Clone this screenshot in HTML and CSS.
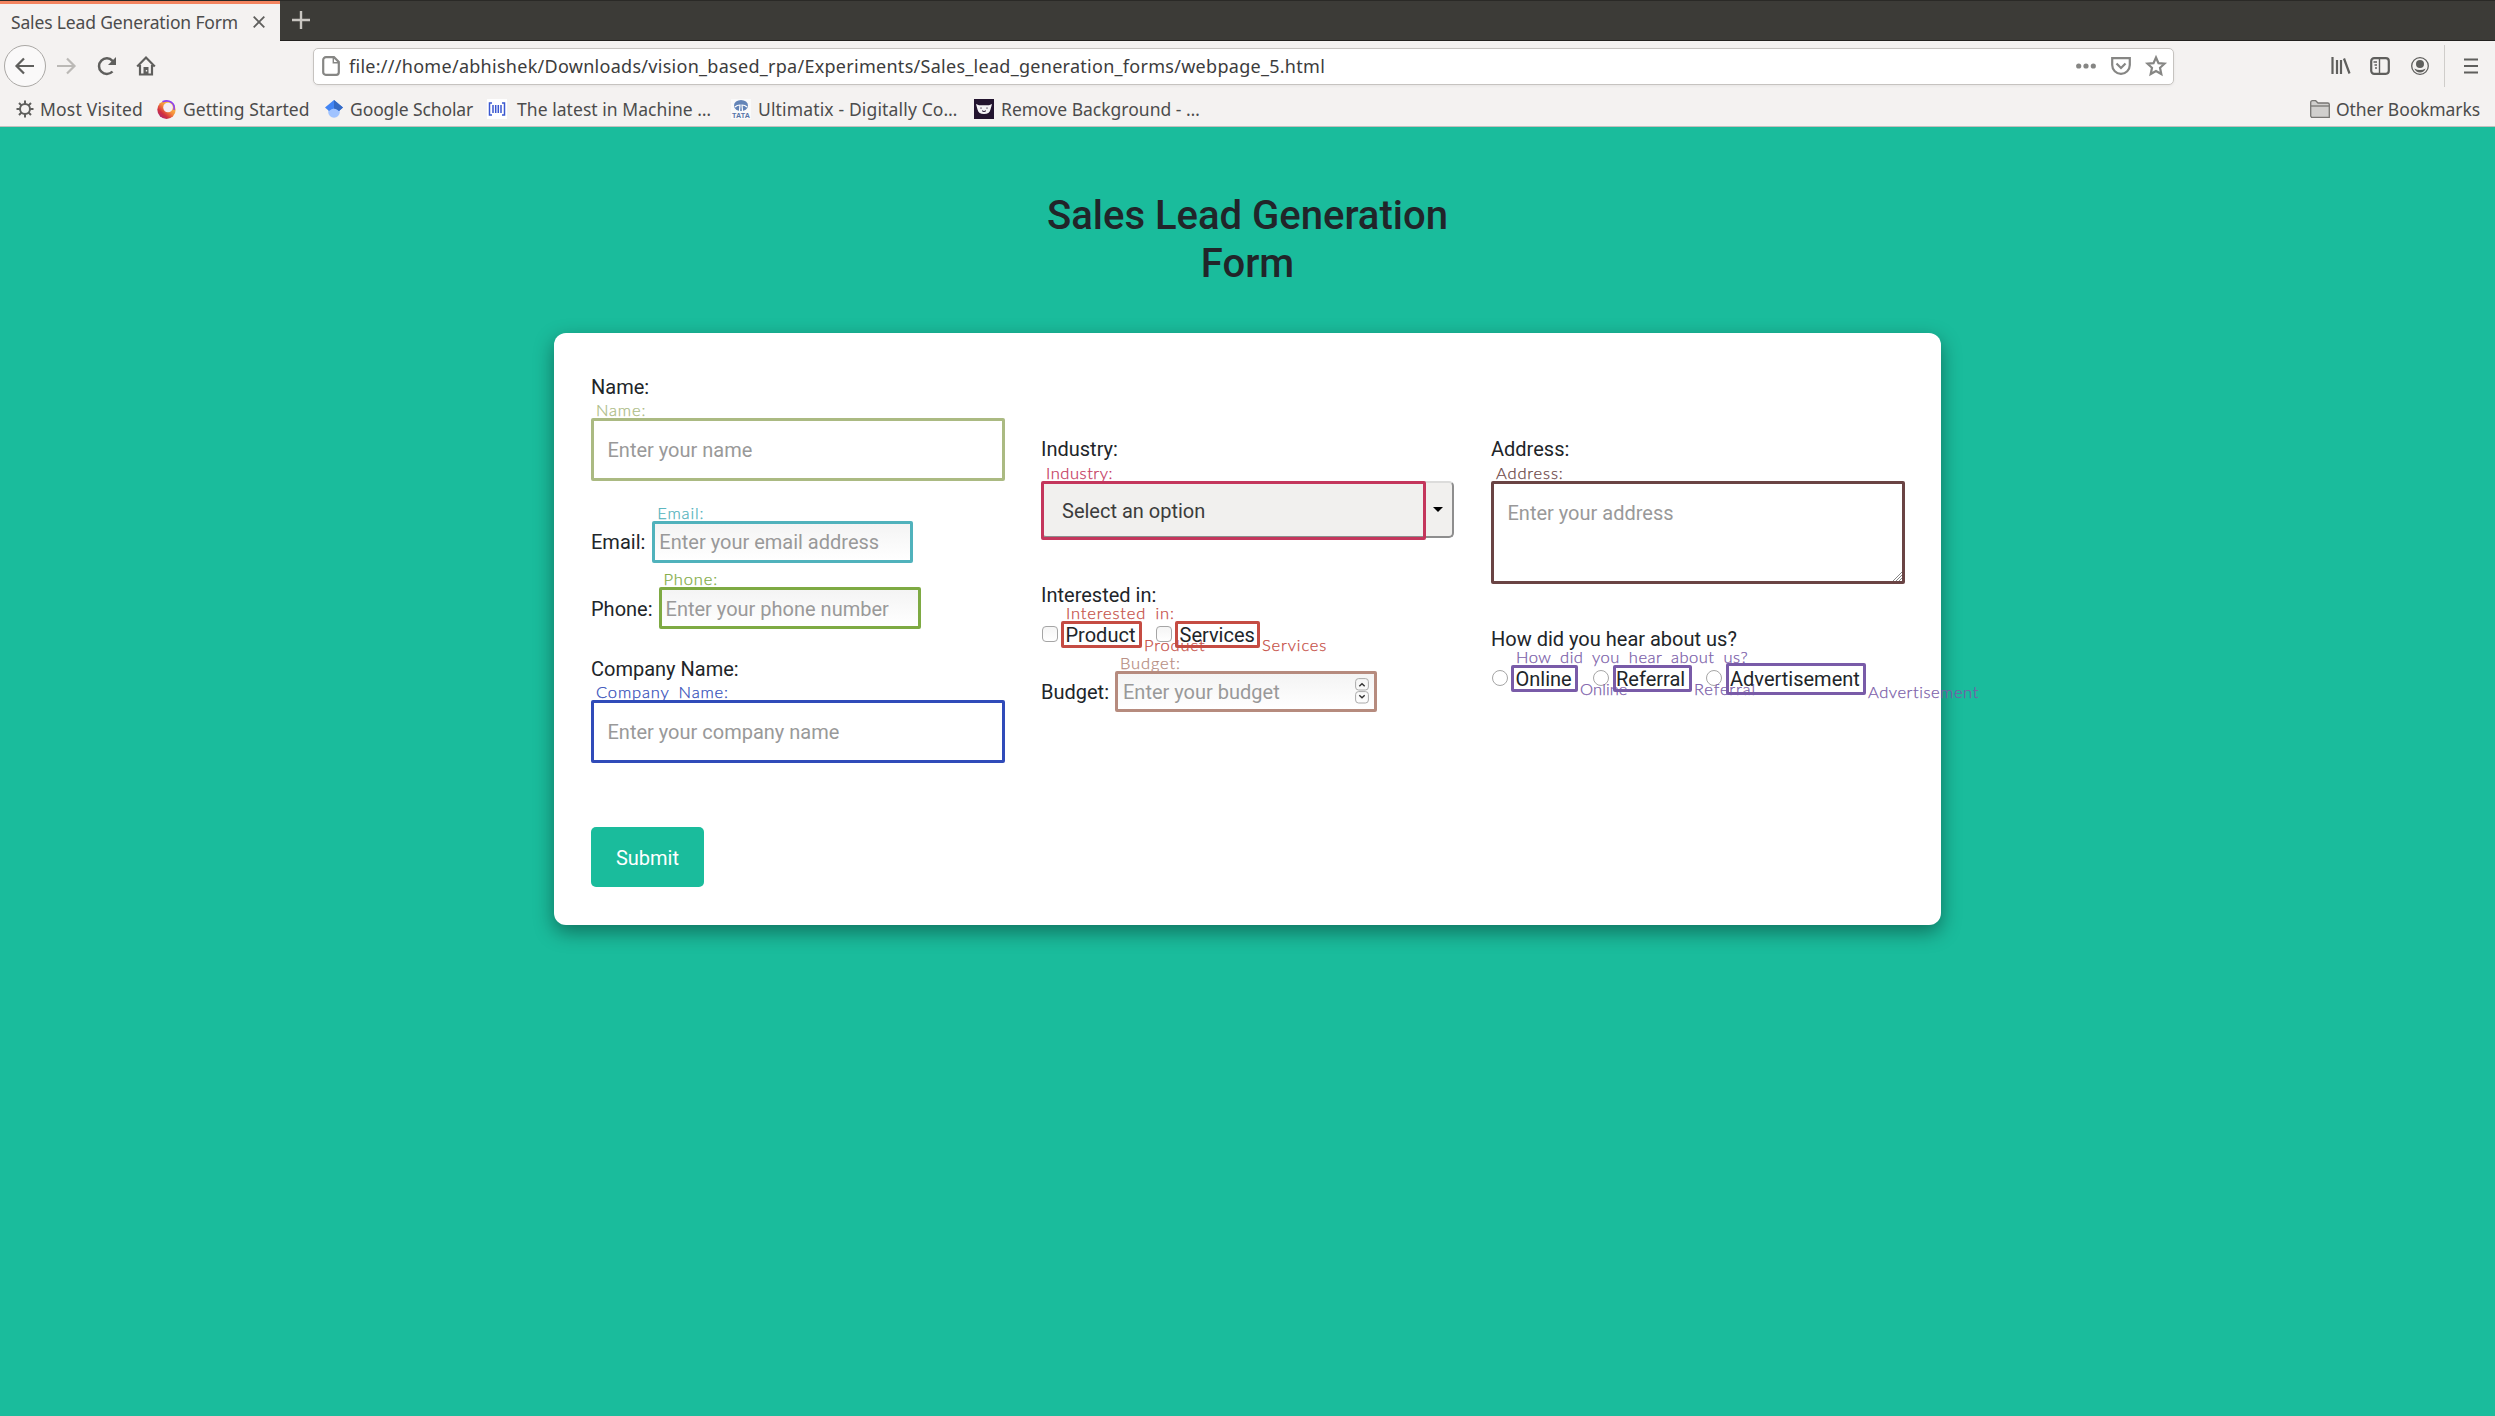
FILE: index.html
```html
<!DOCTYPE html>
<html lang="en">
<head>
<meta charset="utf-8">
<title>Sales Lead Generation Form</title>
<link rel="stylesheet" href="styles.css">
</head>
<body>
<header class="browser">
  <div class="tabs">
    <div class="tab"><span>Sales Lead Generation Form</span>
      <svg class="close" width="12" height="12" viewBox="0 0 12 12"><path d="M.7.7l10.600 10.600M11.300.7L.7 11.300"/></svg>
    </div>
    <svg class="plus" width="18" height="18" viewBox="0 0 18 18"><path d="M9 0v18M0 9h18"/></svg>
  </div>
  <div class="toolbar">
    <div class="back"><svg width="20" height="18" viewBox="0 0 20 18"><path d="M19 9H2M9 1.500L1.500 9 9 16.500"/></svg></div>
    <svg class="forward" width="20" height="18" viewBox="0 0 20 18"><path d="M1 9h17M11 1.500L18.500 9 11 16.500"/></svg>
    <svg class="reload" width="20" height="20" viewBox="0 0 20 20"><path d="M15.500 15.500A7.800 7.800 0 1 1 15.500 4.800L17 7"/><path class="fill" d="M19 1v8h-8z"/></svg>
    <svg class="home" width="20" height="20" viewBox="0 0 20 20"><path d="M1.200 10.500L10 1.500l8.800 9M4 9v9.500h12V9"/><path class="fill" d="M7.500 11h5v8h-5z"/><path class="knob" d="M10.500 14v1.500"/></svg>
    <div class="url">
      <svg class="page" width="18" height="20" viewBox="0 0 18 20"><path d="M4 1.200h8L16.800 6v10.300a2.500 2.500 0 0 1-2.500 2.500H3.700a2.500 2.500 0 0 1-2.500-2.500V4A2.800 2.800 0 0 1 4 1.200z"/><path class="thin" d="M11.300 1.500v5.200h5.200"/></svg>
      <span class="address">file:///home/abhishek/Downloads/vision_based_rpa/Experiments/Sales_lead_generation_forms/webpage_5.html</span>
      <svg width="20" height="6" viewBox="0 0 20 6"><g class="dots"><circle cx="2.700" cy="3" r="2.600"/><circle cx="10" cy="3" r="2.600"/><circle cx="17.300" cy="3" r="2.600"/></g></svg>
      <svg class="pocket" width="20" height="18" viewBox="0 0 20 18"><path d="M1.200 1.200h17.600V8a8.800 8.800 0 0 1-17.600 0z"/><path d="M5.500 6.500L10 11l4.500-4.500"/></svg>
      <svg class="star" width="20" height="20" viewBox="0 0 20 20"><path d="M10 1.500l2.500 5.600 6 .6-4.500 4.100 1.300 6.200L10 15l-5.300 3 1.300-6.200L1.500 7.700l6-.6z"/></svg>
    </div>
    <svg class="library" width="20" height="18" viewBox="0 0 20 18"><path d="M1.500 0v17M6 3v14M10 3v14M13 1.500l5.500 15"/></svg>
    <svg class="sidebar" width="20" height="18" viewBox="0 0 20 18"><rect x="1.200" y="1.200" width="17.600" height="15.600" rx="3"/><path class="thin" d="M9.500 2v14M3.500 5H7M4.500 8H7M5 11h2"/></svg>
    <svg class="account" width="18" height="18" viewBox="0 0 18 18"><circle class="ring" cx="9" cy="9" r="8.300"/><circle class="fill" cx="9" cy="7" r="4"/><path class="fill" d="M3.300 11.500Q9 14.500 14.700 11.500 13 15.500 9 15.500T3.300 11.500z"/></svg>
    <div class="divider"></div>
    <svg class="menu" width="16" height="16" viewBox="0 0 16 16"><path d="M1 1.500h14M1 8h14M1 14.500h14"/></svg>
  </div>
  <nav class="bookmarks">
    <div class="mark most"><svg width="18" height="18" viewBox="0 0 18 18"><circle cx="9" cy="9" r="5"/><path d="M9 4V.5M9 14v3.500M4 9H.5M14 9h3.500M5.500 5.500L3 3M12.500 5.500L15 3M5.500 12.500L3 15M12.500 12.500L15 15"/></svg><span>Most Visited</span></div>
    <div class="mark start"><svg width="19" height="19" viewBox="0 0 19 19"><defs><linearGradient id="fox" x1="0.900" y1="0.100" x2="0.200" y2="0.900"><stop offset="0" stop-color="#ffe14a"/><stop offset=".5" stop-color="#f58a3c"/><stop offset=".8" stop-color="#d2303f"/><stop offset="1" stop-color="#b02a68"/></linearGradient></defs><circle cx="9.500" cy="9.700" r="9.200" fill="url(#fox)"/><circle cx="11" cy="7.500" r="4.800" fill="#f4eef4"/><path class="tail" d="M5.500 1.800C12-1 18.500 3 17 10"/></svg><span>Getting Started</span></div>
    <div class="mark scholar"><svg width="18" height="18" viewBox="0 0 18 18"><circle cx="9" cy="12" r="5.800" fill="#a0c3ff"/><path d="M9 0L0 7.500 4 11q5-5 10 0l4-3.500z" fill="#4285f4"/><path d="M9 0l9 7.500-4 3.500q-2-2.500-5-2.500z" fill="#356ac3"/></svg><span>Google Scholar</span></div>
    <div class="mark latest"><svg width="20" height="20" viewBox="0 0 20 20"><path fill="#fff" d="M0 0h20v20H0z"/><path class="bars" d="M5 4H2.500v12H5M15 4h2.500v12H15M6 6v8M8.700 6v8M11.300 6v8M14 6v8"/></svg><span>The latest in Machine …</span></div>
    <div class="mark tata"><svg width="20" height="20" viewBox="0 0 20 20"><path fill="#fafafa" d="M0 0h20v20H0z"/><ellipse cx="10" cy="6.500" rx="7" ry="5.500" fill="#6485b8"/><path class="rays" d="M8.500 12L9 6Q6 6 4 8M11.500 12L11 6q3 0 5 2"/><text x="10" y="18.700" text-anchor="middle" textLength="18" lengthAdjust="spacingAndGlyphs">TATA</text></svg><span>Ultimatix - Digitally Co…</span></div>
    <div class="mark remove"><svg width="20" height="20" viewBox="0 0 20 20"><path fill="#23142f" d="M0 0h20v20H0z"/><path d="M2 5l3 1.200h10l3-1.200-1.500 5.500q-1 4.500-6.500 4.500t-6.500-4.500z" fill="#f5f3f6"/><path class="smile" d="M7 8.500v1.200M13 8.500v1.200M8 11.800q2 1.500 4 0"/></svg><span>Remove Background - …</span></div>
    <div class="mark other"><svg width="20" height="18" viewBox="0 0 20 18"><path class="folder" d="M.7 16V2.500Q.7.7 2.500.7h3.200L8 3h9.800q1.500 0 1.500 1.500v12.800H1.500z"/><path class="folder" d="M1 6h18"/></svg><span>Other Bookmarks</span></div>
  </nav>
</header>

<main class="page-body">
  <h1>Sales Lead Generation Form</h1>
  <form class="card">
    <div class="columns">
      <div class="column first">
        <label>Name:</label>
        <div class="box wide olive"><input placeholder="Enter your name"><span class="note">Name:</span></div>
        <div class="row email"><label>Email:</label>
          <div class="box small teal"><input placeholder="Enter your email address"><span class="note">Email:</span></div></div>
        <div class="row phone"><label>Phone:</label>
          <div class="box small green"><input placeholder="Enter your phone number"><span class="note">Phone:</span></div></div>
        <label class="company">Company Name:</label>
        <div class="box wide blue"><input placeholder="Enter your company name"><span class="note">Company Name:</span></div>
      </div>
      <div class="column">
        <label>Industry:</label>
        <div class="select"><span>Select an option</span><i class="caret"></i>
          <div class="outline"><span class="note tight">Industry:</span></div></div>
        <label class="interested">Interested in:</label>
        <div class="options red">
          <i class="check"></i><div class="tag product"><b>Product</b><span class="note">Interested in:</span><span class="side">Product</span></div>
          <i class="check next"></i><div class="tag services"><b>Services</b><span class="side">Services</span></div>
        </div>
        <div class="row budget"><label>Budget:</label>
          <div class="box small rose"><input placeholder="Enter your budget">
            <svg class="spin" width="14" height="26" viewBox="0 0 14 26"><rect x=".6" y=".6" width="12.800" height="11.400" rx="3"/><rect x=".6" y="13.600" width="12.800" height="11.400" rx="3"/><path d="M4.300 8.300L7 5.700l2.700 2.600M4.300 17.200L7 19.800l2.700-2.600"/></svg>
            <span class="note">Budget:</span></div></div>
      </div>
      <div class="column">
        <label>Address:</label>
        <div class="box area brown"><textarea placeholder="Enter your address"></textarea>
          <svg class="grip" width="9" height="9" viewBox="0 0 9 9"><path d="M0 9l9-9M3 9l6-6M6 9l3-3"/></svg><span class="note">Address:</span></div>
        <label class="hear">How did you hear about us?</label>
        <div class="options purple">
          <i class="radio"></i><div class="tag online"><b>Online</b><span class="note question">How did you hear about us?</span><span class="side snug">Online</span></div>
          <i class="radio next"></i><div class="tag referral"><b>Referral</b><span class="side">Referral</span></div>
          <i class="radio last"></i><div class="tag advert"><b>Advertisement</b><span class="side tight">Advertisement</span></div>
        </div>
      </div>
    </div>
    <button type="button">Submit</button>
  </form>
</main>
</body>
</html>
```
FILE: styles.css
```css
* { box-sizing: border-box; }
body { margin: 0; min-height: 1416px; background: #1abc9c; overflow: hidden; font: 20px/24px Roboto, sans-serif; color: #212529; }
svg { display: block; flex: none; overflow: visible; }

/* Browser window */
.browser { height: 127px; background: #f4f2f1; border-bottom: 1px solid #c3c0bd; font: 17.5px/24px "Noto Sans", sans-serif; color: #4c4c4c; letter-spacing: .1px; }
.browser span { white-space: nowrap; }
.browser svg { stroke: #5f5f5d; stroke-width: 2.2; fill: none; }
.browser .fill { fill: #5f5f5d; stroke: none; }
.browser .thin { stroke-width: 1.4; }
.tabs { display: flex; height: 41px; background: #3c3b37; border-top: 1px solid #2a2926; box-shadow: inset 0 -1px #22211f; }
.tab { display: flex; align-items: center; width: 280px; height: 41px; padding: 0 0 0 11px; background: #f4f2f1; border-top: 3px solid #f4845f; letter-spacing: -.15px; }
.tab span { width: 242px; margin-top: -3px; }
.browser .close { margin-top: -3px; stroke-width: 1.8; }
.browser .plus { margin: 10px 0 0 12px; stroke: #c9c6c1; stroke-width: 2.4; }
.toolbar { display: flex; align-items: center; height: 51px; padding: 0 0 0 4px; }
.back { display: flex; align-items: center; justify-content: center; width: 42px; height: 42px; border: 1px solid #aaa8a5; border-radius: 50%; background: #faf9f9; }
.browser .forward { margin-left: 10px; stroke: #bbb9b6; }
.reload { margin-left: 21px; }
.home { margin-left: 19px; }
.browser .reload { stroke-width: 2.5; }
.browser .knob { stroke: #f4f2f1; stroke-width: 1.4; }
.url { display: flex; align-items: center; width: 1861px; height: 37px; margin-left: 157px; padding: 0 7px 0 8px; background: #fff; border: 1px solid #c6c3c0; border-radius: 5px; box-shadow: 0 1px 3px rgba(0,0,0,.06); }
.browser .url svg { stroke: #868684; }
.address { flex: 1; margin: -1px 0 0 9px; font-size: 18px; letter-spacing: .28px; color: #3c3c3c; }
.browser .dots { fill: #868684; stroke: none; }
.pocket, .star { margin-left: 15px; }
.library { margin-left: 157px; }
.sidebar { margin-left: 19px; }
.account { margin-left: 21px; }
.browser .ring { stroke-width: 1.3; }
.divider { width: 1px; height: 42px; margin-left: 15px; background: #cfcdca; }
.menu { margin-left: 18px; }
.back, .forward, .reload, .home, .url, .library, .sidebar, .account, .divider, .menu { margin-bottom: 1px; }
.bookmarks { display: flex; height: 34px; padding: 0 15px 0 16px; }
.mark { display: flex; align-items: center; gap: 6px; white-space: nowrap; }
.browser .mark svg { stroke: none; }
.browser .most svg { stroke: #5f5f5d; stroke-width: 2; }
.most { width: 141px; letter-spacing: .2px; }
.start { width: 168px; letter-spacing: .05px; }
.start, .scholar { gap: 7px; }
.tail { stroke: #8a3ff5; stroke-width: 1.6; }
.bars { stroke: #3a57d0; stroke-width: 1.5; }
.rays { stroke: #fff; stroke-width: 1.2; }
.smile { stroke: #23142f; stroke-width: 1; }
.folder { fill: #d0cfcd; stroke: #777673; stroke-width: 1.3; }
.scholar { width: 162px; letter-spacing: -.1px; }
.latest { width: 244px; gap: 10px; letter-spacing: .05px; }
.tata { width: 243px; gap: 7px; letter-spacing: .15px; }
.tata text { font: bold 7px "Liberation Sans", sans-serif; fill: #5674a8; }
.remove { gap: 7px; letter-spacing: 0; }
.other { margin-left: auto; letter-spacing: -.1px; }

/* Form page */
.page-body { display: flex; flex-direction: column; align-items: center; padding-top: 65px; }
h1 { width: 463px; margin: 0 0 45px; text-align: center; font-size: 40px; line-height: 48px; font-weight: 500; }
.card { width: 1387px; height: 592px; padding: 42px 37px 38px; background: #fff; border-radius: 12px; box-shadow: 0 7px 20px rgba(0,0,0,.4); }
.columns { display: grid; grid-template-columns: repeat(3, 413px); gap: 37px; height: 388px; }
.column { padding-top: 62px; }
.first { padding-top: 0; }
label { display: block; white-space: nowrap; }
.row { display: flex; align-items: center; }
.box { position: relative; border: 3px solid; border-radius: 2px; background: #fff; }
.box input, .box textarea { display: block; width: 100%; height: 100%; margin: 0; border: 0; outline: 0; background: none; font: 20px/24px Roboto, sans-serif; resize: none; overflow: hidden; }
.box ::placeholder { color: #999; opacity: 1; }
.wide { width: 414px; height: 63px; margin-top: 19px; }
.wide input { padding: 0 13.500px; }
.small { width: 262px; height: 42px; background: linear-gradient(#f4f4f4, #fff); }
.small input { padding: 0 4px; }
.email { margin-top: 40px; }
.email .box { width: 261px; margin-left: 7px; }
.phone { margin-top: 24px; }
.phone label { padding-top: 2px; }
.phone .box { margin-left: 6px; }
.phone input { padding-top: 1px; }
.company { margin-top: 28px; }
.area { width: 414px; height: 103px; margin-top: 20px; }
.area textarea { padding: 17px 13.500px; }
.grip { position: absolute; right: 0; bottom: 0; stroke: #888; fill: none; }

.olive { border-color: #abba82; color: #abba82; }
.teal { border-color: #50b2bc; color: #50b2bc; }
.green { border-color: #7eaa43; color: #7eaa43; }
.blue { border-color: #304bb9; color: #304bb9; }
.rose { border-color: #b68b7e; color: #b68b7e; }
.brown { border-color: #6a4444; color: #6a4444; }
.red { color: #c54c43; }
.purple { color: #795ba8; }

/* Detected-field captions */
.note, .side { position: absolute; font: 300 16.500px/16px Lato, sans-serif; letter-spacing: .85px; word-spacing: 4px; white-space: pre; -webkit-text-stroke: .25px; }
.note { left: 2px; bottom: calc(100% + 3px); }
.side { left: calc(100% + 5px); top: calc(100% - 8px); }
.tight { letter-spacing: .55px; }
.snug { letter-spacing: .1px; }
.question { letter-spacing: .5px; }

.select { position: relative; display: flex; align-items: center; justify-content: space-between; width: 413px; height: 57px; margin-top: 20px; padding: 2px 9px 0 19px; background: #f1f0ee; border: 2px solid; border-color: #dcdcdb #8e8e8e #8e8e8e #dcdcdb; border-radius: 5px; color: #3c3c3c; }
.caret { border: 5px solid transparent; border-top-color: #000; border-bottom: 0; margin-top: -3px; }
.outline { position: absolute; left: -2px; top: -2px; width: 385px; height: 59px; border: 3px solid #c4365c; border-radius: 2px; color: #c4365c; }
.interested { margin-top: 45px; }
.options { display: flex; align-items: flex-start; margin-top: 14px; padding-left: 1px; }
.check, .radio { width: 16px; height: 16px; margin: 5px 3px 0 0; border: 1px solid #a5a5a5; background: linear-gradient(#f5f5f5, #fff); flex: none; }
.check { border-radius: 4px; }
.radio { border-radius: 50%; background: #fff; }
.check.next { margin-left: 14px; }
.tag { position: relative; display: flex; align-items: center; height: 27px; padding-left: 1.500px; border: 3px solid; border-radius: 2px; flex: none; }
.tag b { font-weight: 400; color: #212529; }
.product { width: 81px; }
.services { width: 85px; }
.budget { margin-top: 23px; }
.budget .box { height: 41px; margin-left: auto; margin-right: 77px; }
.budget input { padding-left: 5px; }
.spin { position: absolute; right: 5px; top: 4px; fill: none; stroke: #aaa; }
.spin path { stroke: #333; stroke-width: 1.4; }
.hear { margin-top: 43px; }
.purple { margin-top: 12px; }
.purple .radio { margin-top: 7px; }
.purple .tag { margin-top: 2px; }
.radio.next { margin-left: 15px; margin-right: 4px; }
.radio.last { margin-left: 14px; margin-right: 4px; }
.online { width: 67px; }
.referral { width: 79px; padding-left: 0; }
.purple .advert { width: 140px; height: 32px; margin-top: 0; padding-left: 1px; }

button { display: flex; align-items: center; justify-content: center; width: 113px; height: 60px; margin-top: 64px; padding: 1px 0 0; border: 0; border-radius: 5px; background: #1abc9c; color: #fff; font: 20px/24px Roboto, sans-serif; }
```
